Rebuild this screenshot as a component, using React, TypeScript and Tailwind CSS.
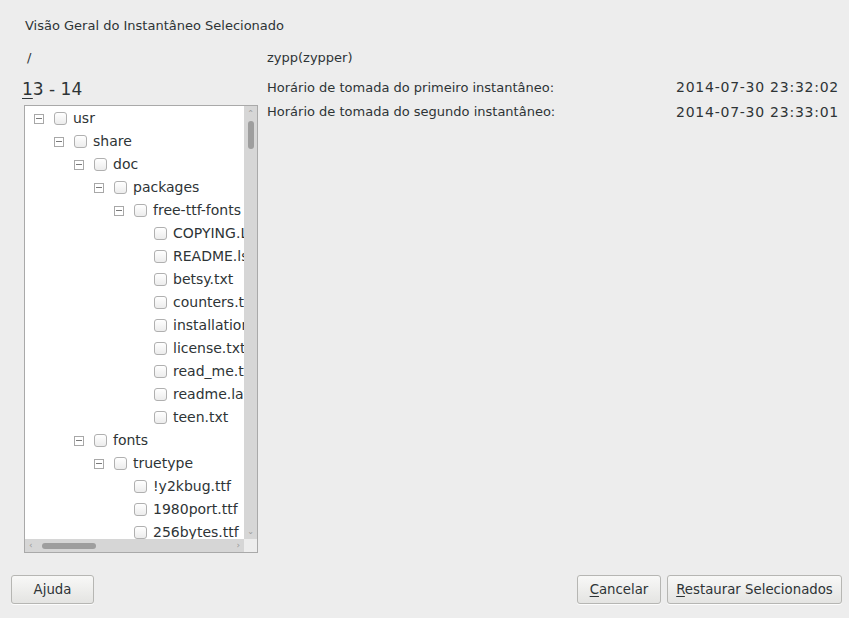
import React from "react";

interface Node {
  name: string;
  level: number;
  folder?: boolean;
}

const nodes: Node[] = [
  { name: "usr", level: 0, folder: true },
  { name: "share", level: 1, folder: true },
  { name: "doc", level: 2, folder: true },
  { name: "packages", level: 3, folder: true },
  { name: "free-ttf-fonts", level: 4, folder: true },
  { name: "COPYING.LIB", level: 5 },
  { name: "README.lsm", level: 5 },
  { name: "betsy.txt", level: 5 },
  { name: "counters.txt", level: 5 },
  { name: "installation.txt", level: 5 },
  { name: "license.txt", level: 5 },
  { name: "read_me.txt", level: 5 },
  { name: "readme.latin", level: 5 },
  { name: "teen.txt", level: 5 },
  { name: "fonts", level: 2, folder: true },
  { name: "truetype", level: 3, folder: true },
  { name: "!y2kbug.ttf", level: 4 },
  { name: "1980port.ttf", level: 4 },
  { name: "256bytes.ttf", level: 4 },
];

function Expander() {
  return (
    <span className="w-[10px] h-[10px] border border-[#a8a8a8] bg-white flex items-center justify-center shrink-0">
      <span className="w-[6px] h-px bg-[#7a7a7a]" />
    </span>
  );
}

function Check() {
  return (
    <span className="w-[13px] h-[13px] rounded-[3px] border border-[#b0b0b0] bg-gradient-to-b from-white to-[#ececec] shrink-0" />
  );
}

function Button({ children, className }: { children: React.ReactNode; className?: string }) {
  return (
    <button className={"h-[29px] rounded-[3px] border border-[#b6b6b3] bg-gradient-to-b from-[#f8f8f7] to-[#e4e4e2] text-[13.3px] text-[#2e3436] shadow-[0_1px_0_rgba(255,255,255,0.8)] " + (className ?? "")}>
      {children}
    </button>
  );
}

export default function App() {
  return (
    <div className="w-[849px] h-[618px] bg-[#ededed] text-[#2e3436] text-[13px] flex flex-col overflow-hidden" style={{ fontFamily: '"DejaVu Sans", sans-serif' }}>
      <div className="pl-[25px] pt-[16px] h-[44px]">Visão Geral do Instantâneo Selecionado</div>
      <div className="flex pl-[24px] pr-[11px]">
        <div className="w-[234px] flex flex-col">
          <div className="h-[27px] pl-[3px] leading-[27px]">/</div>
          <div className="h-[34px] pt-[6px] text-[17px] -ml-[2px] leading-[24px]">
            <span className="underline underline-offset-[3px] decoration-1">1</span>3 - 14
          </div>
          <div className="h-[448px] border border-[#a9a9a9] bg-white flex flex-col">
            <div className="flex flex-1 min-h-0">
              <div className="flex-1 overflow-hidden pt-[1px] text-[14px]">
                {nodes.map((n) => (
                  <div
                    key={n.name}
                    className="h-[23px] flex items-center whitespace-nowrap"
                    style={{ paddingLeft: 9 + n.level * 20 }}
                  >
                    <span className="w-[20px] flex items-center shrink-0">{n.folder && <Expander />}</span>
                    <Check />
                    <span className="ml-[6px]">{n.name}</span>
                  </div>
                ))}
              </div>
              <div className="w-[13px] bg-[#d6d6d6] flex flex-col items-center pt-[4px]">
                <span className="text-[8px] leading-[8px] text-[#9a9a9a]">⌃</span>
                <span className="w-[6px] h-[28px] rounded-full bg-[#9e9e9e] mt-[3px]" />
                <span className="flex-1" />
                <span className="text-[8px] leading-[8px] text-[#9a9a9a] mb-[3px]">⌄</span>
              </div>
            </div>
            <div className="h-[13px] flex">
              <div className="flex-1 bg-[#d6d6d6] flex items-center pl-[4px] pr-[4px]">
                <span className="text-[9px] text-[#9a9a9a] leading-none">‹</span>
                <span className="w-[54px] h-[6px] rounded-full bg-[#9e9e9e] ml-[9px]" />
                <span className="flex-1" />
                <span className="text-[9px] text-[#9a9a9a] leading-none">›</span>
              </div>
              <div className="w-[13px] bg-[#ededed]" />
            </div>
          </div>
        </div>
        <div className="flex-1 pl-[9px] flex flex-col">
          <div className="h-[27px] leading-[27px]">zypp(zypper)</div>
          <div className="h-[30px] pt-[3px] leading-[27px] flex justify-between items-center">
            <span>Horário de tomada do primeiro instantâneo:</span>
            <span className="text-[14px] tracking-[0.75px] -mr-[1px]">2014-07-30 23:32:02</span>
          </div>
          <div className="h-[28px] leading-[28px] -mt-[3px] flex justify-between items-center">
            <span>Horário de tomada do segundo instantâneo:</span>
            <span className="text-[14px] tracking-[0.75px] -mr-[1px]">2014-07-30 23:33:01</span>
          </div>
        </div>
      </div>
      <div className="flex items-center pl-[11px] pr-[7px] mt-[22px]">
        <Button className="w-[83px]">Ajuda</Button>
        <div className="flex-1" />
        <Button className="w-[84px]">
          <span className="underline underline-offset-2">C</span>ancelar
        </Button>
        <Button className="w-[175px] ml-[6px]">
          <span className="underline underline-offset-2">R</span>estaurar Selecionados
        </Button>
      </div>
    </div>
  );
}
